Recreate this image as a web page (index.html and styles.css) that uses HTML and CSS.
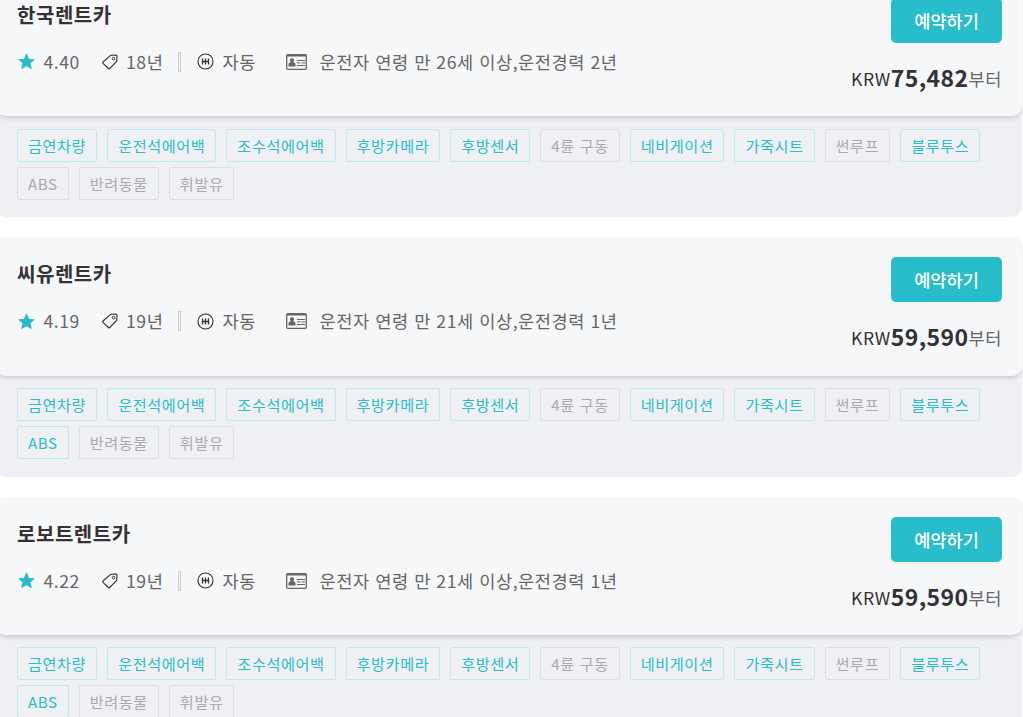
FILE: index.html
```html
<!DOCTYPE html>
<html lang="ko">
<head>
    <meta charset="UTF-8">
    <meta name="viewport" content="width=device-width, initial-scale=1.0">
    <title>렌트카 업체 목록</title>
    <link rel="stylesheet" href="styles.css">
</head>
<body>
    <svg class="sprite">
        <symbol id="icon-star" viewBox="0 0 16 16">
            <path fill="currentColor" stroke="currentColor" stroke-linejoin="round" d="M8 1.200l2 4.600 5 .5-3.800 3.300 1.200 4.900L8 11.900l-4.400 2.600 1.200-4.900L1 6.300l5-.5z"/>
        </symbol>
        <symbol id="icon-tag" viewBox="0 0 16 16">
            <path fill="none" stroke="currentColor" stroke-width="1.100" stroke-linejoin="round" d="M8.600 1.300L14 1c.6 0 1 .4 1 1l-.3 5.400L7.700 14.500c-.4.4-.9.4-1.300 0L1 9.300c-.4-.4-.4-.9 0-1.300z"/>
            <circle fill="none" stroke="currentColor" cx="11.600" cy="4.600" r="1.300"/>
        </symbol>
        <symbol id="icon-gear" viewBox="0 0 17 17">
            <circle fill="none" stroke="currentColor" stroke-width="1.100" cx="8.500" cy="8.500" r="7.500"/>
            <path fill="none" stroke="currentColor" stroke-width="1.300" d="M5.500 5.500v6M8.500 5.500v6M11.500 5.500v6M5.500 8.500h6"/>
        </symbol>
        <symbol id="icon-license" viewBox="0 0 21 16">
            <rect fill="none" stroke="currentColor" stroke-width="1.300" x=".7" y=".7" width="19.600" height="14.600" rx="1"/>
            <path fill="currentColor" d="M1 1h19v1.600H1zM6 4.300a2 2 0 0 1 1.400 3.500c-.1.500 0 .7.500.8 1 .3 1.600 1 1.600 2.500v1.400h-7v-1.400c0-1.500.6-2.200 1.600-2.500.5-.1.6-.3.5-.8A2 2 0 0 1 6 4.300z"/>
            <path fill="none" stroke="currentColor" d="M11 6.500h8M11 8.900h3.500M15.500 8.900H19M11 11.500h8"/>
        </symbol>
    </svg>

    <div class="company-list">
        <div class="company">
            <div class="company-head">
                <div class="company-info">
                    <h2>한국렌트카</h2>
                    <div class="specs">
                        <svg class="star"><use href="#icon-star"/></svg>
                        <span class="score">4.40</span>
                        <svg class="tag-icon"><use href="#icon-tag"/></svg>
                        <span class="year">18년</span>
                        <i class="bar"></i>
                        <svg class="gear"><use href="#icon-gear"/></svg>
                        <span class="mission">자동</span>
                        <svg class="license"><use href="#icon-license"/></svg>
                        <span>운전자 연령 만 26세 이상,운전경력 2년</span>
                    </div>
                </div>
                <div class="booking">
                    <button type="button" class="btn">예약하기</button>
                    <p class="price">KRW<strong>75,482</strong><span>부터</span></p>
                </div>
            </div>
            <ul class="options">
                <li class="on">금연차량</li>
                <li class="on">운전석에어백</li>
                <li class="on">조수석에어백</li>
                <li class="on">후방카메라</li>
                <li class="on">후방센서</li>
                <li>4륜 구동</li>
                <li class="on">네비게이션</li>
                <li class="on">가죽시트</li>
                <li>썬루프</li>
                <li class="on">블루투스</li>
                <li>ABS</li>
                <li>반려동물</li>
                <li>휘발유</li>
            </ul>
        </div>

        <div class="company">
            <div class="company-head">
                <div class="company-info">
                    <h2>씨유렌트카</h2>
                    <div class="specs">
                        <svg class="star"><use href="#icon-star"/></svg>
                        <span class="score">4.19</span>
                        <svg class="tag-icon"><use href="#icon-tag"/></svg>
                        <span class="year">19년</span>
                        <i class="bar"></i>
                        <svg class="gear"><use href="#icon-gear"/></svg>
                        <span class="mission">자동</span>
                        <svg class="license"><use href="#icon-license"/></svg>
                        <span>운전자 연령 만 21세 이상,운전경력 1년</span>
                    </div>
                </div>
                <div class="booking">
                    <button type="button" class="btn">예약하기</button>
                    <p class="price">KRW<strong>59,590</strong><span>부터</span></p>
                </div>
            </div>
            <ul class="options">
                <li class="on">금연차량</li>
                <li class="on">운전석에어백</li>
                <li class="on">조수석에어백</li>
                <li class="on">후방카메라</li>
                <li class="on">후방센서</li>
                <li>4륜 구동</li>
                <li class="on">네비게이션</li>
                <li class="on">가죽시트</li>
                <li>썬루프</li>
                <li class="on">블루투스</li>
                <li class="on">ABS</li>
                <li>반려동물</li>
                <li>휘발유</li>
            </ul>
        </div>

        <div class="company">
            <div class="company-head">
                <div class="company-info">
                    <h2>로보트렌트카</h2>
                    <div class="specs">
                        <svg class="star"><use href="#icon-star"/></svg>
                        <span class="score">4.22</span>
                        <svg class="tag-icon"><use href="#icon-tag"/></svg>
                        <span class="year">19년</span>
                        <i class="bar"></i>
                        <svg class="gear"><use href="#icon-gear"/></svg>
                        <span class="mission">자동</span>
                        <svg class="license"><use href="#icon-license"/></svg>
                        <span>운전자 연령 만 21세 이상,운전경력 1년</span>
                    </div>
                </div>
                <div class="booking">
                    <button type="button" class="btn">예약하기</button>
                    <p class="price">KRW<strong>59,590</strong><span>부터</span></p>
                </div>
            </div>
            <ul class="options">
                <li class="on">금연차량</li>
                <li class="on">운전석에어백</li>
                <li class="on">조수석에어백</li>
                <li class="on">후방카메라</li>
                <li class="on">후방센서</li>
                <li>4륜 구동</li>
                <li class="on">네비게이션</li>
                <li class="on">가죽시트</li>
                <li>썬루프</li>
                <li class="on">블루투스</li>
                <li class="on">ABS</li>
                <li>반려동물</li>
                <li>휘발유</li>
            </ul>
        </div>
    </div>
</body>
</html>
```
FILE: styles.css
```css
* {
    box-sizing: border-box;
}
html {
    overflow: hidden;
}
body {
    margin: 0;
    height: 717px;
    overflow: hidden;
    background-color: #fff;
    color: #333;
    font-family: "Noto Sans CJK KR", sans-serif;
    letter-spacing: 0.55px;
}
.sprite {
    display: none;
}
.company-list {
    width: 1026px;
    margin: -22.3px 0 0 -4px;
    display: flex;
    flex-direction: column;
    gap: 20px;
}
.company {
    height: 239.45px;
    flex: none;
    border-radius: 10px;
    background-color: #eff0f4;
}
.company-head {
    height: 138.6px;
    padding: 20px 20px 0 21px;
    display: flex;
    justify-content: space-between;
    border-radius: 10px;
    background-color: #f6f7f9;
    box-shadow: 0 3px 5px -1px rgba(0, 0, 0, 0.16);
}
.company-info h2 {
    margin: 0;
    font-size: 20px;
    line-height: 34px;
    font-weight: 700;
}
.specs {
    margin-top: 15px;
    height: 30px;
    display: flex;
    align-items: center;
    color: #666;
    font-size: 17.6px;
    line-height: 30px;
    white-space: nowrap;
}
.specs svg {
    flex: none;
}
.specs .star {
    width: 17px;
    height: 17px;
    margin: 0 8.5px 0 1px;
    color: #28bdca;
}
.score {
    width: 58.5px;
}
.specs .tag-icon {
    width: 16px;
    height: 16px;
    margin-right: 8px;
    color: #333;
}
.year {
    width: 52px;
}
.bar {
    width: 3px;
    height: 20px;
    margin-right: 16px;
    border: 1px solid #ccc;
}
.specs .gear {
    width: 17px;
    height: 17px;
    margin-right: 8.5px;
    color: #333;
}
.mission {
    width: 63px;
}
.specs .license {
    width: 21px;
    height: 16px;
    margin-right: 13px;
}
.booking {
    display: flex;
    flex-direction: column;
    align-items: flex-end;
}
.btn {
    width: 111px;
    height: 45px;
    padding: 0;
    border: none;
    border-radius: 5px;
    background-color: #28bdca;
    color: #fff;
    font-family: inherit;
    font-size: 17.6px;
    font-weight: 500;
}
.price {
    margin: 18px 0 0;
    font-size: 17.6px;
    line-height: 36px;
    white-space: nowrap;
}
.price strong {
    font-size: 23px;
    font-weight: 600;
    line-height: 1;
    letter-spacing: 0.4px;
    vertical-align: -1px;
}
.price span {
    color: #666;
}
.options {
    margin: 0;
    padding: 12.27px 20px 0 21px;
    display: flex;
    flex-wrap: wrap;
    gap: 5px 10px;
    list-style: none;
}
.options li {
    height: 33px;
    padding: 0 10px;
    border: 1px solid #ddd;
    border-radius: 2px;
    color: #aaa;
    font-size: 15.2px;
    line-height: 31px;
    letter-spacing: 0.56px;
}
.options .on {
    border-color: #bfe9e9;
    color: #28bdca;
}
```
